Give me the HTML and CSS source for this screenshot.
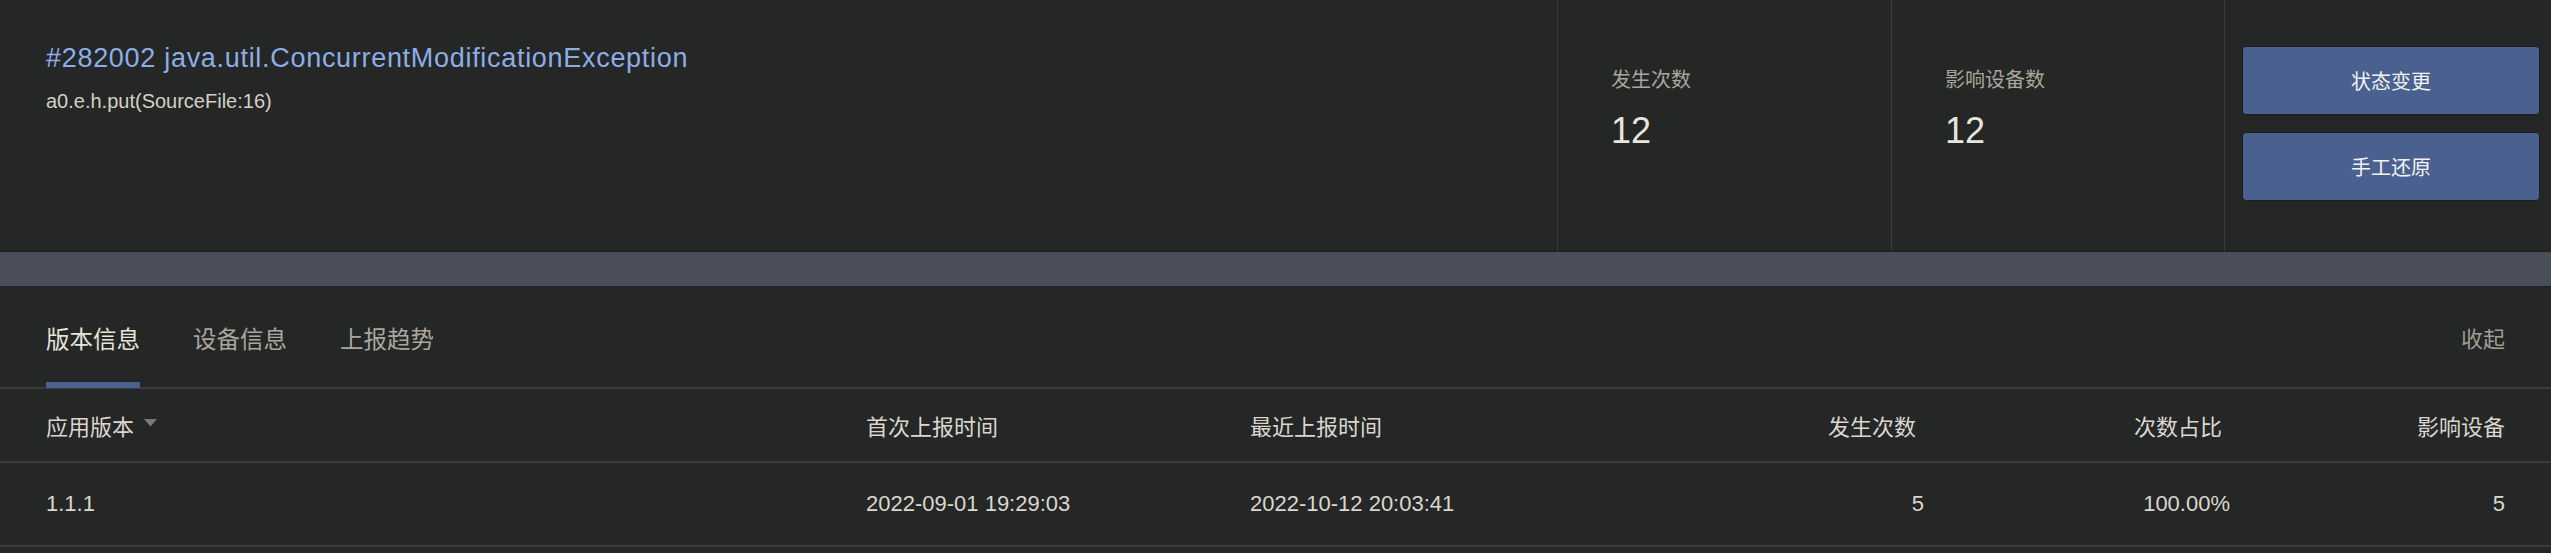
FILE: index.html
```html
<!DOCTYPE html>
<html lang="zh-CN">
<head>
<meta charset="utf-8">
<title>Issue detail</title>
<link rel="stylesheet" href="styles.css">
</head>
<body>
<header class="summary">
  <div class="summary-main">
    <div class="issue-title">#282002 java.util.ConcurrentModificationException</div>
    <div class="issue-sub">a0.e.h.put(SourceFile:16)</div>
  </div>
  <div class="stat">
    <div class="stat-label">发生次数</div>
    <div class="stat-value">12</div>
  </div>
  <div class="stat">
    <div class="stat-label">影响设备数</div>
    <div class="stat-value">12</div>
  </div>
  <div class="actions">
    <button class="btn">状态变更</button>
    <button class="btn">手工还原</button>
  </div>
</header>
<div class="band"></div>
<section class="panel">
  <nav class="tabs">
    <div class="tab active">版本信息</div>
    <div class="tab">设备信息</div>
    <div class="tab">上报趋势</div>
    <div class="collapse">收起</div>
  </nav>
  <div class="grid head">
    <div class="cell">应用版本<svg class="caret" width="13" height="8" viewBox="0 0 13 8"><path d="M0 0H13L6.5 7.5Z" fill="#7c7a73"/></svg></div>
    <div class="cell">首次上报时间</div>
    <div class="cell">最近上报时间</div>
    <div class="cell num pad">发生次数</div>
    <div class="cell num pad">次数占比</div>
    <div class="cell num">影响设备</div>
  </div>
  <div class="grid row">
    <div class="cell">1.1.1</div>
    <div class="cell">2022-09-01 19:29:03</div>
    <div class="cell">2022-10-12 20:03:41</div>
    <div class="cell num">5</div>
    <div class="cell num">100.00%</div>
    <div class="cell num">5</div>
  </div>
</section>
</body>
</html>
```
FILE: styles.css
```css
* { box-sizing: border-box; }
html, body {
  margin: 0;
  padding: 0;
  background: #252626;
  font-family: "Liberation Sans", "Noto Sans CJK SC", sans-serif;
  color: #d9d6ce;
}
.summary {
  display: flex;
  height: 252px;
  border-bottom: 1px solid #1e1f21;
}
.summary-main {
  flex: 1;
  padding: 42px 0 0 46px;
}
.issue-title {
  font-size: 27px;
  line-height: 32px;
  letter-spacing: 0.7px;
  color: #8caee6;
}
.issue-sub {
  margin-top: 15px;
  font-size: 20px;
  line-height: 24px;
  color: #d4d0c5;
}
.stat {
  width: 334px;
  border-left: 1px solid #3b3c3d;
  padding: 66px 0 0 53px;
}
.stat + .stat { width: 333px; }
.stat-label {
  font-size: 20px;
  line-height: 28px;
  color: #a9a69d;
}
.stat-value {
  margin-top: 17px;
  font-size: 36px;
  line-height: 40px;
  color: #e8e5dc;
}
.actions {
  width: 327px;
  border-left: 1px solid #3b3c3d;
  padding: 46px 11px 0 17px;
  display: flex;
  flex-direction: column;
  gap: 17px;
}
.btn {
  width: 298px;
  height: 69px;
  border: 1px solid #1c1d20;
  border-radius: 4px;
  background: #4a6190;
  color: #f2f2f2;
  font-family: "Liberation Sans", "Noto Sans CJK SC", sans-serif;
  font-size: 20px;
  padding: 0;
}
.band {
  height: 35px;
  background: #4a4e5b;
  border-bottom: 1px solid #202124;
}
.tabs {
  display: flex;
  height: 102px;
  padding: 0 46px;
  gap: 53px;
  border-bottom: 2px solid #3b3c3d;
}
.tab {
  display: flex;
  align-items: center;
  padding-top: 6px;
  margin-bottom: -1px;
  border-bottom: 6px solid transparent;
  font-size: 23.5px;
  color: #aaa79f;
}
.tab.active {
  color: #e6e3db;
  border-bottom-color: #4a6190;
}
.collapse {
  margin-left: auto;
  display: flex;
  align-items: center;
  font-size: 22px;
  color: #a09d95;
}
.grid {
  display: grid;
  grid-template-columns: 820px 384px 374px 300px 306px 275px;
  padding: 0 46px;
  border-bottom: 2px solid #3b3c3d;
  align-items: center;
  font-size: 22px;
  color: #dad7cf;
}
.head { height: 74px; }
.row { height: 84px; }
.cell {
  display: flex;
  align-items: center;
  white-space: nowrap;
}
.num { justify-content: flex-end; }
.pad { padding-right: 8px; }
.caret { margin-left: 10px; margin-top: -4px; }
```
